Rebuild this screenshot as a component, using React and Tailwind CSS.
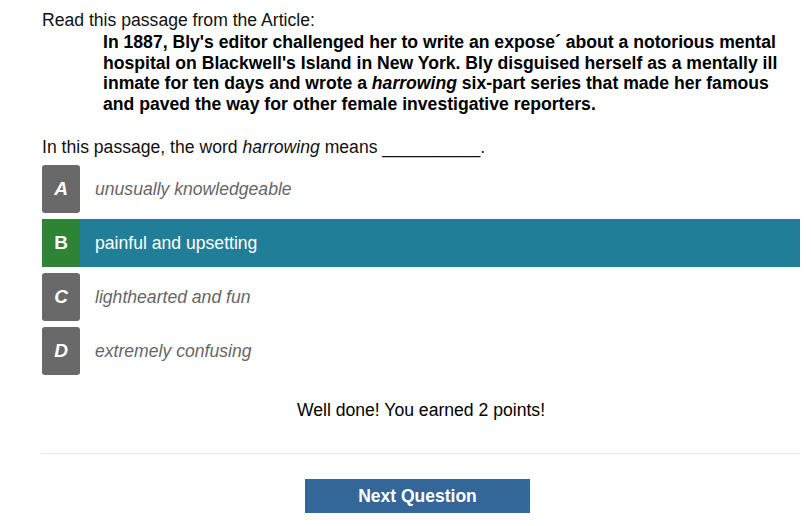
export default function App() {
  const opts = [
    { l: "A", t: "unusually knowledgeable" },
    { l: "B", t: "painful and upsetting", correct: true },
    { l: "C", t: "lighthearted and fun" },
    { l: "D", t: "extremely confusing" },
  ];
  return (
    <div className="w-[811px] h-[526px] bg-white overflow-hidden" style={{ fontFamily: '"Liberation Sans", Arial, sans-serif' }}>
      <div className="ml-[42px] w-[758px] pt-[10px]">
        <div className="text-[17.6px] leading-[20px] text-[#111]">Read this passage from the Article:</div>
        <div className="ml-[61px] mt-[2px] font-bold text-[17.6px] leading-[20.6px] text-black">
          In 1887, Bly's editor challenged her to write an expose´ about a notorious mental hospital on Blackwell's Island in New York. Bly disguised herself as a mentally ill inmate for ten days and wrote a <i>harrowing</i> six-part series that made her famous and paved the way for other female investigative reporters.
        </div>
        <div className="mt-[23px] text-[17.6px] leading-[20px] text-[#111]">
          In this passage, the word <i>harrowing</i> means __________.
        </div>
        <div className="mt-[8px] flex flex-col gap-[6px]">
          {opts.map((o) => (
            <div key={o.l} className={`flex items-center h-[48px] ${o.correct ? "bg-[#217e99]" : ""}`}>
              <div className={`w-[38px] h-[48px] shrink-0 flex items-center justify-center text-white font-bold text-[19px] ${o.correct ? "bg-[#2e8435]" : "bg-[#696969] rounded-[3px] italic"}`}>
                {o.l}
              </div>
              <div className={`ml-[15px] text-[17.6px] ${o.correct ? "text-white" : "text-[#666] italic"}`}>{o.t}</div>
            </div>
          ))}
        </div>
        <div className="mt-[25px] text-center text-[17.6px] leading-[20px] text-black">Well done! You earned 2 points!</div>
        <div className="mt-[33px] border-t border-[#e6e6e6]"></div>
        <div className="mt-[25px] flex justify-center pr-[7px]">
          <div className="w-[225px] h-[34px] bg-[#336699] text-white font-bold text-[17.5px] flex items-center justify-center">Next Question</div>
        </div>
      </div>
    </div>
  );
}
